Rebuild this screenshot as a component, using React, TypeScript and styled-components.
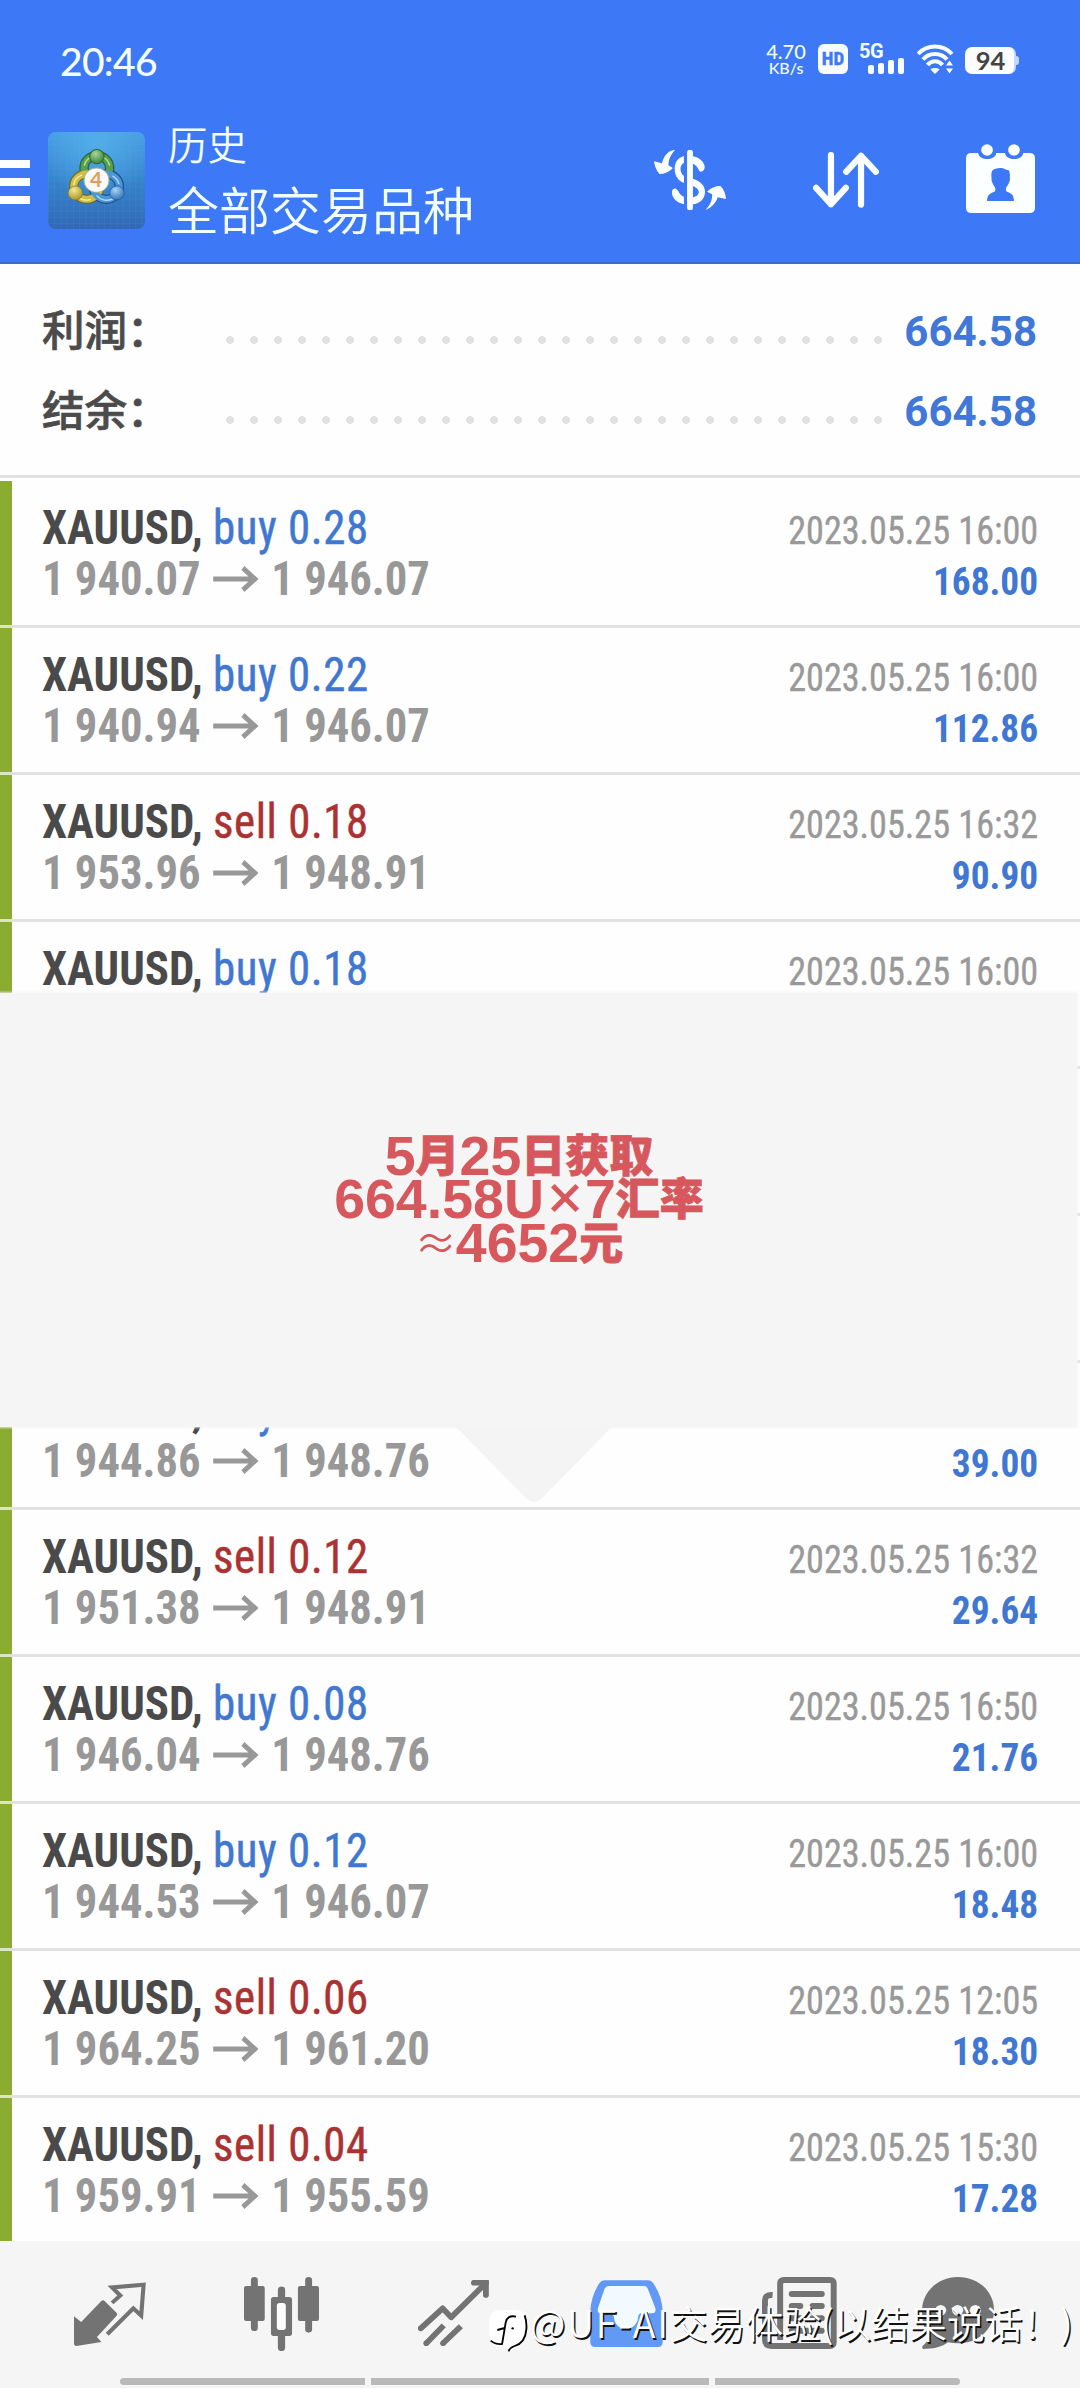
import React from 'react';
import styled, { createGlobalStyle } from 'styled-components';

const CJK = "'Noto Sans CJK SC'";
const BLUE = '#3d79f6';

const GlobalStyle = createGlobalStyle`
  * { box-sizing: border-box; }
  body { margin: 0; background: #fefefe; }
`;

const Screen = styled.div`
  position: relative;
  width: 1080px;
  height: 2388px;
  overflow: hidden;
  display: flex;
  flex-direction: column;
  background: #fefefe;
  font-family: Roboto, ${CJK}, sans-serif;
`;

/* ---------- header ---------- */

const Header = styled.header`
  height: 264px;
  flex: none;
  display: flex;
  flex-direction: column;
  background: ${BLUE};
  border-bottom: 2px solid #3f6bc4;
  color: #f2fdff;
`;

const StatusBar = styled.div`
  height: 112px;
  padding: 8px 61px 0 60px;
  display: flex;
  align-items: center;
  justify-content: space-between;
`;

const Clock = styled.span`
  font: 500 39px/60px Lato, Roboto, sans-serif;
  letter-spacing: -0.7px;
  padding-top: 1px;
`;

const StatusIcons = styled.div`
  display: flex;
  align-items: center;
  height: 34px;
  margin-bottom: 2px;
`;

const Speed = styled.div`
  width: 40px;
  margin-right: 12px;
  display: flex;
  flex-direction: column;
  align-items: center;
  font-family: Lato, Roboto, sans-serif;
  font-weight: 500;
`;

const SpeedValue = styled.span`
  font-size: 20px;
  line-height: 17px;
`;

const SpeedUnit = styled.span`
  font-size: 16px;
  line-height: 15px;
`;

const HdBadge = styled.span`
  width: 30px;
  height: 30px;
  border-radius: 6px;
  display: flex;
  align-items: center;
  justify-content: center;
  background: #f7fdff;
  color: ${BLUE};
  font: 700 19px/30px 'Roboto Condensed', Roboto, sans-serif;
  -webkit-text-stroke: 0.4px ${BLUE};
  margin-right: 11px;
`;

const Network = styled.div`
  width: 46px;
  height: 30px;
  margin-right: 12px;
  display: flex;
  align-items: flex-end;
  position: relative;
`;

const NetworkLabel = styled.span`
  position: absolute;
  left: 0;
  top: -2px;
  font: 700 20px/19px Roboto, sans-serif;
  letter-spacing: -0.5px;
`;

const Bars = styled.div`
  display: flex;
  align-items: flex-end;
  gap: 4px;
  padding-left: 9px;
`;

const Bar = styled.i<{ $h: number }>`
  width: 6px;
  height: ${p => p.$h}px;
  border-radius: 2px;
  background: #f7fdff;
`;

const Battery = styled.div`
  margin-left: 11px;
  display: flex;
  align-items: center;
  padding-top: 3px;
`;

const BatteryBody = styled.span`
  width: 51px;
  height: 27px;
  border-radius: 7px;
  background: #fbfdff;
  border-right: 2px solid #c4d7ff;
  color: #444;
  text-align: center;
  font: 700 25.5px/27px Lato, Roboto, sans-serif;
  padding-left: 2px;
`;

const BatteryTip = styled.span`
  width: 3px;
  height: 9px;
  border-radius: 0 3px 3px 0;
  background: #c4d7ff;
`;

const Toolbar = styled.div`
  height: 150px;
  display: flex;
  align-items: flex-start;
`;

const MenuButton = styled.div`
  width: 30px;
  margin-top: 48px;
  display: flex;
  flex-direction: column;
  gap: 10px;
`;

const MenuLine = styled.i`
  height: 8px;
  background: #fdffff;
`;

const AppLogo = styled.svg`
  width: 97px;
  height: 97px;
  margin: 20px 0 0 18px;
  border-radius: 8px;
`;

const Titles = styled.div`
  margin-left: 23px;
  padding-top: 8px;
  flex: 1;
  display: flex;
  flex-direction: column;
  gap: 10px;
  font-family: ${CJK}, sans-serif;
  font-weight: 350;
`;

const Caption = styled.span`
  font-size: 39.5px;
  line-height: 46px;
`;

const Title = styled.span`
  font-size: 51px;
  line-height: 64px;
`;

const ActionIcon = styled.svg<{ $w: number; $h: number; $top: number; $gap: number }>`
  width: ${p => p.$w}px;
  height: ${p => p.$h}px;
  margin: ${p => p.$top}px ${p => p.$gap}px 0 0;
  fill: #fbffff;
`;

/* ---------- summary ---------- */

const Summary = styled.section`
  flex: none;
  height: 214px;
  padding: 26px 43px 0 42px;
  border-bottom: 3px solid #e2e2e2;
`;

const SummaryRow = styled.div`
  height: 80px;
  display: flex;
  align-items: center;
`;

const SummaryLabel = styled.span`
  width: 176px;
  font: 500 42.5px/60px ${CJK}, sans-serif;
  color: #4b4b4b;
  -webkit-text-stroke: 0.7px #4b4b4b;
  margin-top: -4px;
`;

const Leader = styled.i`
  width: 672px;
  height: 8px;
  margin-top: 20px;
  background: radial-gradient(circle at 12px 4px, #e1e1e1 3.6px, transparent 4.3px) 0 0 / 24px 8px repeat-x;
`;

const SummaryValue = styled.span`
  flex: 1;
  text-align: right;
  white-space: nowrap;
  font: 700 42px/60px Roboto, sans-serif;
  color: #4077d8;
  padding-top: 3px;
`;

/* ---------- deals ---------- */

const DealList = styled.main`
  flex: none;
  height: 1763px;
  padding-top: 3px;
  overflow: hidden;
`;

const DealRow = styled.div`
  height: 144px;
  display: flex;
`;

const Marker = styled.i`
  width: 12px;
  background: #8aac31;
`;

const Divider = styled.div`
  height: 3px;
  background: linear-gradient(90deg, #dbe5c6 12px, #e2e2e2 12px);
`;

const DealInfo = styled.div`
  flex: 1;
  padding: 21px 0 0 30px;
  font: 400 48px/51px 'Roboto Condensed', Roboto, sans-serif;
  white-space: nowrap;
`;

const Line = styled.div<{ $sx: number }>`
  transform: scaleX(${p => p.$sx});
  transform-origin: left;
`;

const Symbol = styled.b`
  font-weight: 700;
  color: #4a4a4a;
`;

const Side = styled.span<{ $sell: boolean }>`
  color: ${p => (p.$sell ? '#ab3233' : '#4077d0')};
  -webkit-text-stroke: 0.5px currentColor;
  letter-spacing: 0.6px;
`;

const Prices = styled(Line)`
  display: flex;
  align-items: center;
  font-weight: 700;
  color: #989898;
`;

const Arrow = styled.svg`
  width: 49px;
  height: 26px;
  margin: 0 14px 0 13px;
  stroke: #989898;
  stroke-width: 5;
  fill: none;
`;

const DealResult = styled.div`
  padding: 24px 42px 0 0;
  text-align: right;
  font: 400 39.5px/51px 'Roboto Condensed', Roboto, sans-serif;
  white-space: nowrap;
`;

const RightLine = styled(Line)`
  transform-origin: right;
`;

const Time = styled(RightLine)`
  color: #999;
  -webkit-text-stroke: 0.4px #999;
`;

const Profit = styled(RightLine)`
  font-weight: 700;
  color: #4077d3;
`;

/* ---------- note bubble over the list ---------- */

const Note = styled.aside`
  position: absolute;
  left: 0;
  top: 993px;
  width: 1077px;
  height: 434px;
  padding: 142px 39px 0 0;
  background: #f5f5f5;
  box-shadow: 0 0 2px 1px rgba(245, 245, 245, 0.8);
  display: flex;
  flex-direction: column;
  align-items: center;
  font-family: 'Liberation Sans', ${CJK}, sans-serif;
  font-weight: 700;
  font-size: 55.5px;
  line-height: 43.3px;
  color: #d6585d;
  white-space: nowrap;
`;

const NoteTail = styled.svg`
  position: absolute;
  left: 454px;
  top: 433px;
  width: 160px;
  height: 78px;
  fill: #f4f4f4;
`;

const NoteLine = styled.div`
  height: 43.3px;
  display: flex;
  align-items: baseline;
`;

const Han = styled.span`
  font-family: ${CJK}, sans-serif;
  font-weight: 900;
  font-size: 44px;
  transform: translateY(-3px);
  -webkit-text-stroke: 0.8px #d6585d;
`;

const Sign = styled.span<{ $weight: number; $shift: number }>`
  width: 41px;
  font-family: ${CJK}, sans-serif;
  font-weight: ${p => p.$weight};
  font-size: 42px;
  transform: translateY(${p => p.$shift}px);
`;

/* ---------- bottom navigation ---------- */

const BottomNav = styled.nav`
  flex: 1;
  background: #f5f5f5;
  display: flex;
  flex-direction: column;
`;

const Tabs = styled.div`
  height: 137px;
  padding: 36px 0 0 74px;
  display: flex;
  align-items: flex-start;
`;

const TabIcon = styled.svg<{ $w: number; $h: number; $top: number; $gap: number }>`
  width: ${p => p.$w}px;
  height: ${p => p.$h}px;
  margin: ${p => p.$top}px ${p => p.$gap}px 0 0;
  fill: #737373;
  stroke: none;
`;

const HomeBar = styled.div`
  display: flex;
  gap: 6px;
  padding-left: 120px;
`;

const HomeSegment = styled.i<{ $w: number; $r: string }>`
  width: ${p => p.$w}px;
  height: 7px;
  border-radius: ${p => p.$r};
  background: #b9b9b9;
`;

const Watermark = styled.div`
  position: absolute;
  left: 488px;
  top: 2296px;
  display: flex;
  align-items: flex-start;
  color: #fff;
  font: 350 37.8px/52px ${CJK}, sans-serif;
  text-shadow: 1.5px 1.5px 0.5px #111;
  white-space: nowrap;
`;

const Handle = styled.span`
  letter-spacing: 1.7px;
`;

const WatermarkLogo = styled.svg`
  width: 40px;
  height: 45px;
  margin: 12px 2px 0 0;
`;

type Deal = { sell?: boolean; lot: string; from: string; to: string; time: string; profit: string };

const deals: Deal[] = [
  { lot: '0.28', from: '1 940.07', to: '1 946.07', time: '16:00', profit: '168.00' },
  { lot: '0.22', from: '1 940.94', to: '1 946.07', time: '16:00', profit: '112.86' },
  { sell: true, lot: '0.18', from: '1 953.96', to: '1 948.91', time: '16:32', profit: '90.90' },
  { lot: '0.18', from: '', to: '', time: '16:00', profit: '' },
  { lot: '', from: '', to: '', time: '', profit: '' },
  { lot: '', from: '', to: '', time: '', profit: '' },
  { lot: '0.10', from: '1 944.86', to: '1 948.76', time: '16:50', profit: '39.00' },
  { sell: true, lot: '0.12', from: '1 951.38', to: '1 948.91', time: '16:32', profit: '29.64' },
  { lot: '0.08', from: '1 946.04', to: '1 948.76', time: '16:50', profit: '21.76' },
  { lot: '0.12', from: '1 944.53', to: '1 946.07', time: '16:00', profit: '18.48' },
  { sell: true, lot: '0.06', from: '1 964.25', to: '1 961.20', time: '12:05', profit: '18.30' },
  { sell: true, lot: '0.04', from: '1 959.91', to: '1 955.59', time: '15:30', profit: '17.28' },
];

function Deals() {
  return (
    <DealList>
      {deals.map((d, i) => (
        <React.Fragment key={i}>
          <DealRow>
            <Marker />
            {d.lot && (
              <DealInfo>
                <Line $sx={0.935}>
                  <Symbol>XAUUSD, </Symbol>
                  <Side $sell={!!d.sell}>
                    {d.sell ? 'sell' : 'buy'} {d.lot}
                  </Side>
                </Line>
                {d.from && (
                  <Prices $sx={0.93}>
                    {d.from}
                    <Arrow viewBox="0 0 49 26">
                      <path d="M0 13H45M32 2L45 13L32 24" />
                    </Arrow>
                    {d.to}
                  </Prices>
                )}
              </DealInfo>
            )}
            {d.time && (
              <DealResult>
                <Time $sx={0.915}>2023.05.25 {d.time}</Time>
                <Profit $sx={0.945}>{d.profit}</Profit>
              </DealResult>
            )}
          </DealRow>
          {i < deals.length - 1 && <Divider />}
        </React.Fragment>
      ))}
    </DealList>
  );
}

function MetaLogo() {
  return (
    <AppLogo viewBox="0 0 280 288" preserveAspectRatio="none">
      <defs>
        <linearGradient id="bg" x1="0" y1="0" x2="0" y2="1">
          <stop offset="0" stopColor="#479be4" />
          <stop offset="0.5" stopColor="#3584cb" />
          <stop offset="1" stopColor="#3268b6" />
        </linearGradient>
        <radialGradient id="glow" cx="0.5" cy="0.1" r="0.6">
          <stop offset="0" stopColor="#55b4ea" stopOpacity="0.8" />
          <stop offset="1" stopColor="#55b4ea" stopOpacity="0" />
        </radialGradient>
        <pattern id="mesh" width="18" height="18" patternUnits="userSpaceOnUse">
          <path d="M0 0H18M0 0V18" stroke="#6cb0ea" strokeOpacity="0.25" strokeWidth="2" />
        </pattern>
        <radialGradient id="g" cx="0.4" cy="0.3" r="0.8">
          <stop offset="0" stopColor="#a7d792" />
          <stop offset="1" stopColor="#2d7a34" />
        </radialGradient>
        <radialGradient id="y" cx="0.4" cy="0.3" r="0.8">
          <stop offset="0" stopColor="#f3ea8e" />
          <stop offset="1" stopColor="#a38a20" />
        </radialGradient>
        <radialGradient id="b" cx="0.4" cy="0.3" r="0.8">
          <stop offset="0" stopColor="#a5d4f7" />
          <stop offset="1" stopColor="#2566ad" />
        </radialGradient>
      </defs>
      <rect width="280" height="288" fill="url(#bg)" />
      <rect width="280" height="288" fill="url(#mesh)" />
      <rect width="280" height="288" fill="url(#glow)" />
      <g fill="none" strokeWidth="27" stroke="#255d4a">
        <circle cx="141" cy="107" r="37" />
        <circle cx="112" cy="162" r="38" stroke="#6d6a2c" />
        <circle cx="168" cy="162" r="38" stroke="#1f4f8c" />
      </g>
      <g fill="none" strokeWidth="20">
        <circle cx="141" cy="107" r="37" stroke="#5aa048" />
        <circle cx="112" cy="162" r="38" stroke="#d0be45" />
        <circle cx="168" cy="162" r="38" stroke="#4a96d6" />
      </g>
      <g fill="none" strokeWidth="4" strokeOpacity="0.8">
        <path d="M105 100A37 37 0 0 1 125 74M160 75A37 37 0 0 1 178 100" stroke="#d4f0c4" />
        <path d="M74 160A38 38 0 0 1 98 127M92 197A38 38 0 0 0 124 200" stroke="#fdf6b8" />
        <path d="M205 155A38 38 0 0 0 186 130M140 188A38 38 0 0 0 190 197" stroke="#cfe8ff" />
      </g>
      <circle cx="141" cy="73" r="21" fill="url(#g)" stroke="#2a6a33" strokeWidth="3" />
      <circle cx="79" cy="181" r="21" fill="url(#y)" stroke="#7d7225" strokeWidth="2" />
      <circle cx="199" cy="181" r="21" fill="url(#b)" stroke="#1f549a" strokeWidth="2" />
      <circle cx="140" cy="143" r="36" fill="#fbfafa" stroke="#9fb39a" strokeWidth="3" />
      <text x="139" y="164" textAnchor="middle" fontFamily="Lato" fontWeight="700" fontSize="60" fill="#e79b58">
        4
      </text>
    </AppLogo>
  );
}

export default function App() {
  return (
    <Screen>
      <GlobalStyle />
      <Header>
        <StatusBar>
          <Clock>20:46</Clock>
          <StatusIcons>
            <Speed>
              <SpeedValue>4.70</SpeedValue>
              <SpeedUnit>KB/s</SpeedUnit>
            </Speed>
            <HdBadge>HD</HdBadge>
            <Network>
              <NetworkLabel>5G</NetworkLabel>
              <Bars>
                <Bar $h={9} />
                <Bar $h={11} />
                <Bar $h={14} />
                <Bar $h={16} />
              </Bars>
            </Network>
            <svg width="37" height="30" viewBox="0 0 37 30">
              <g fill="none" stroke="#f7fdff" strokeWidth="4">
                <path d="M1 10C10 0 26 0 35 10" />
                <path d="M6 15.5C12 8 24 8 30 15.5" />
                <path d="M10.5 21C14.5 16 21.5 16 25.5 21" />
              </g>
              <path d="M18 30L13.5 25.5C15 23.5 21 23.5 22.5 25.5ZM29 21.5L32.5 16.5L36 21.5ZM29 24.5H36L32.5 29.5Z" fill="#f7fdff" />
            </svg>
            <Battery>
              <BatteryBody>94</BatteryBody>
              <BatteryTip />
            </Battery>
          </StatusIcons>
        </StatusBar>
        <Toolbar>
          <MenuButton>
            <MenuLine />
            <MenuLine />
            <MenuLine />
          </MenuButton>
          <MetaLogo />
          <Titles>
            <Caption>历史</Caption>
            <Title>全部交易品种</Title>
          </Titles>
          <ActionIcon $w={72} $h={60} $top={38} $gap={87} viewBox="331 450 209 180" preserveAspectRatio="none">
            <path d="M392 450C374 450 360 466 354 490L331 484C333 500 338 512 347 522C362 522 374 516 386 504L373 496C373 478 380 464 392 450Z" />
            <path d="M480 630C498 624 510 610 516 592L540 597C539 582 534 568 524 558C508 558 496 564 485 575L500 583C500 602 494 616 480 630Z" />
            <rect x="427" y="449" width="17" height="182" rx="8" />
            <path d="M418 468C398 474 391 490 391 506C391 528 402 542 418 549V528C411 522 408 514 408 507C408 498 411 492 418 488Z" />
            <path d="M444 469C462 472 474 484 478 498C479 508 474 515 466 515C460 512 459 498 444 491Z" />
            <path d="M444 536C466 544 479 556 479 575C479 598 464 610 444 613V592C454 590 461 584 461 576C461 569 454 562 444 558Z" />
            <path d="M418 613C396 608 383 594 383 576C383 568 389 565 394 566C404 570 402 584 418 590Z" />
          </ActionIcon>
          <ActionIcon $w={66} $h={56} $top={40} $gap={87} viewBox="793 458 191 164" preserveAspectRatio="none">
            <g fill="none" stroke="#fbffff" strokeWidth="18" strokeLinecap="round" strokeLinejoin="round">
              <path d="M845 467V611M802 563L845 611L888 563" />
              <path d="M932 612V469M889 516L932 469L975 516" />
            </g>
          </ActionIcon>
          <ActionIcon $w={69} $h={69} $top={32} $gap={45} viewBox="1237 432 200 207" preserveAspectRatio="none">
            <path
              fillRule="evenodd"
              d="M1253 459H1272C1274 472 1286 477 1298 477C1311 477 1323 472 1325 459H1350C1352 472 1364 477 1376 477C1389 477 1401 472 1403 459H1421Q1437 459 1437 475V623Q1437 639 1421 639H1253Q1237 639 1237 623V475Q1237 459 1253 459ZM1313 512C1308 522 1312 532 1311 542L1316 554C1321 562 1324 566 1321 574C1312 580 1298 580 1298 603H1376C1376 580 1364 580 1354 574C1350 566 1354 562 1359 554L1364 542C1364 532 1366 520 1361 511L1353 509C1342 500 1320 504 1313 512Z"
            />
            <circle cx="1298" cy="450" r="17" />
            <circle cx="1376" cy="450" r="17" />
          </ActionIcon>
        </Toolbar>
      </Header>

      <Summary>
        <SummaryRow>
          <SummaryLabel>利润：</SummaryLabel>
          <Leader />
          <SummaryValue>664.58</SummaryValue>
        </SummaryRow>
        <SummaryRow>
          <SummaryLabel>结余：</SummaryLabel>
          <Leader />
          <SummaryValue>664.58</SummaryValue>
        </SummaryRow>
      </Summary>

      <Deals />

      <BottomNav>
        <Tabs>
          <TabIcon $w={72} $h={64} $top={5} $gap={98} viewBox="215 248 210 190" preserveAspectRatio="none">
            <path d="M215 350L236 367L294 305Q299 300 305 305L339 339Q343 344 338 350L282 411L295 426L222 438Q215 438 215 430Z" />
            <g fill="none" stroke="#737373" strokeWidth="12">
              <path d="M326 310L350 288L326 264L418 256L411 348L388 326L312 403" />
            </g>
          </TabIcon>
          <TabIcon $w={75} $h={74} $top={0} $gap={99} viewBox="709 231 217 222" preserveAspectRatio="none">
            <path d="M729 241A10 10 0 0 1 749 241V258H763Q769 258 769 264V357Q769 363 763 363H749V383A10 10 0 0 1 729 383V363H715Q709 363 709 357V264Q709 258 715 258H729Z" />
            <path d="M886 241A10 10 0 0 1 906 241V258H920Q926 258 926 264V357Q926 363 920 363H906V388A10 10 0 0 1 886 388V363H871Q865 363 865 357V264Q865 258 871 258H886Z" />
            <path d="M807 270A10 10 0 0 1 828 270V291H840Q848 291 848 299V400Q848 408 840 408H828V443A10 10 0 0 1 807 443V408H795Q787 408 787 400V299Q787 291 795 291H807Z" />
            <rect x="804" y="309" width="26" height="81" rx="8" fill="#fcfcfc" />
          </TabIcon>
          <TabIcon $w={71} $h={66} $top={3} $gap={101} viewBox="1213 240 207 198" preserveAspectRatio="none">
            <g fill="none" stroke="#737373" strokeWidth="17">
              <path d="M1221 385L1285 325L1310 352L1411 249" strokeLinejoin="round" strokeLinecap="round" />
              <path d="M1376 248H1411V285" strokeLinecap="round" />
              <path d="M1288 376L1237 430M1338 379L1286 430" />
            </g>
            <circle cx="1237" cy="430" r="8.5" />
            <circle cx="1286" cy="430" r="8.5" />
          </TabIcon>
          <TabIcon $w={73} $h={67} $top={3} $gap={99} viewBox="330 59 219 199" preserveAspectRatio="none">
            <path
              fill="#6199f4"
              d="M373 60H503Q514 60 520 69Q546 106 548 152V244Q548 258 533 258H346Q331 258 331 244V152Q333 106 358 69Q364 60 373 60Z"
            />
            <path
              fill="#f3faff"
              d="M388 77H492Q500 77 503 84L526 142Q530 158 515 158H484Q475 158 474 172C472 192 456 204 438 204C420 204 404 192 402 172Q401 158 392 158H362Q350 158 354 142L374 84Q378 77 388 77Z"
            />
          </TabIcon>
          <TabIcon $w={75} $h={72} $top={0} $gap={85} viewBox="847 51 227 216" preserveAspectRatio="none">
            <g fill="none" stroke="#737373" strokeWidth="18">
              <path d="M879 105Q856 103 856 122V238Q856 258 876 258H1052Q1064 258 1064 247V71Q1064 60 1053 60H914Q902 60 902 71V240" />
              <path d="M937 102H1028M937 138H963M1000 138H1028M937 175H963M1000 175H1028M937 212H1028" strokeLinecap="round" />
            </g>
          </TabIcon>
          <TabIcon $w={72} $h={72} $top={0} $gap={0} viewBox="1109 231 208 216" preserveAspectRatio="none">
            <path d="M1212 231C1272 231 1317 274 1317 330C1317 390 1270 430 1212 430C1202 430 1193 429 1184 427C1165 442 1140 447 1112 447Q1107 440 1113 436C1122 430 1127 418 1126 402C1114 382 1109 360 1109 333C1109 275 1156 231 1212 231Z" />
            <g fill="#f5f5f5">
              <circle cx="1163" cy="331" r="16" />
              <circle cx="1212" cy="331" r="16" />
              <circle cx="1263" cy="331" r="16" />
            </g>
          </TabIcon>
        </Tabs>
        <HomeBar>
          <HomeSegment $w={245} $r="4px 0 0 4px" />
          <HomeSegment $w={338} $r="0" />
          <HomeSegment $w={245} $r="0 4px 4px 0" />
        </HomeBar>
      </BottomNav>

      <Note>
        <NoteLine>
          5<Han>月</Han>25<Han>日获取</Han>
        </NoteLine>
        <NoteLine>
          664.58U
          <Sign $weight={900} $shift={-4}>
            ×
          </Sign>
          7<Han>汇率</Han>
        </NoteLine>
        <NoteLine>
          <Sign $weight={350} $shift={-3}>
            ≈
          </Sign>
          4652<Han>元</Han>
        </NoteLine>
        <NoteTail viewBox="0 0 160 78">
          <path d="M0 0H160L156 3L87 73Q80 79 73 73L4 3Z" />
        </NoteTail>
      </Note>

      <Watermark>
        <WatermarkLogo viewBox="24 142 120 135">
          <path d="M62 148H104Q138 148 140 184V206Q138 246 106 255L84 276L86 262Q30 264 27 212V184Q29 148 62 148Z" fill="#fff" />
          <g fill="none" stroke="#000" strokeWidth="5.5">
            <path d="M134 164Q141 184 139 206Q136 246 104 256Q88 262 86 272" />
            <path d="M108 168Q82 162 77 186L66 252M52 208L74 202M32 240Q46 252 66 250" />
          </g>
          <circle cx="98" cy="203" r="3.5" />
        </WatermarkLogo>
        <Handle>@UF-AI</Handle>
        交易体验(以结果说话！)
      </Watermark>
    </Screen>
  );
}
